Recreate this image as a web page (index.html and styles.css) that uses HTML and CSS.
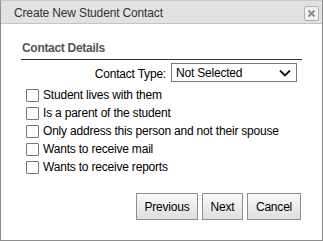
FILE: index.html
```html
<!DOCTYPE html>
<html>
<head>
<meta charset="utf-8">
<link rel="stylesheet" href="styles.css">
</head>
<body>
<div class="dialog">
  <div class="titlebar">
    <span class="title">Create New Student Contact</span>
    <span class="close"><svg width="9" height="9" viewBox="0 0 9 9"><path d="M1.5 1.5 L7.5 7.5 M7.5 1.5 L1.5 7.5" stroke="#8a8a8a" stroke-width="1.8"/></svg></span>
  </div>
  <div class="content">
    <div class="section-title">Contact Details</div>
    <div class="type-row">
      <span class="type-label">Contact Type:</span>
      <div class="select"><span>Not Selected</span><svg width="12" height="8" viewBox="0 0 12 8"><path d="M1 1.5 L6 6.5 L11 1.5" fill="none" stroke="#111" stroke-width="1.8"/></svg></div>
    </div>
    <div class="checks">
      <div class="check"><span class="box"></span><span>Student lives with them</span></div>
      <div class="check"><span class="box"></span><span>Is a parent of the student</span></div>
      <div class="check"><span class="box"></span><span>Only address this person and not their spouse</span></div>
      <div class="check"><span class="box"></span><span>Wants to receive mail</span></div>
      <div class="check"><span class="box"></span><span>Wants to receive reports</span></div>
    </div>
    <div class="buttons">
      <button class="btn prev">Previous</button>
      <button class="btn next">Next</button>
      <button class="btn cancel">Cancel</button>
    </div>
  </div>
</div>
</body>
</html>
```
FILE: styles.css
```css
html, body { margin: 0; padding: 0; background: #fff; }
body { font-family: "Liberation Sans", Arial, sans-serif; font-size: 12px; color: #000; letter-spacing: -0.2px; }
.dialog {
  width: 321px; height: 239px;
  border: 1px solid #8c8c8c;
  border-top-color: #c8c8c8;
  display: flex; flex-direction: column;
}
.titlebar {
  height: 22px;
  background: #e2e2e2;
  border-bottom: 1px solid #c4c4c4;
  display: flex; align-items: center; justify-content: space-between;
  padding: 0 3px 0 13px;
}
.title { color: #333; font-size: 12px; padding-top: 1px; letter-spacing: -0.15px; }
.close {
  width: 13px; height: 13px;
  border: 1px solid #b0b0b0; border-radius: 2px;
  background: #f2f2f2;
  display: flex; align-items: center; justify-content: center;
  margin-top: 3px;
}
.content { padding: 0 20px 0 20px; display: flex; flex-direction: column; }
.section-title {
  margin-top: 17px;
  font-weight: bold; font-size: 12px; color: #555; letter-spacing: -0.3px;
  padding: 0 0 4px 1px;
  border-bottom: 1px solid #333;
  width: 280px;
}
.type-row { display: flex; align-items: center; justify-content: flex-end; margin-top: 3px; padding-right: 5px; }
.type-label { margin-right: 5px; padding-top: 3px; }
.select {
  width: 115px; height: 17px;
  border: 1px solid #767676;
  display: flex; align-items: center; justify-content: space-between;
  padding: 0 5px 0 4px;
}
.checks { display: flex; flex-direction: column; margin-top: 4px; padding-left: 5px; }
.check { display: flex; align-items: center; height: 18px; }
.box { width: 11px; height: 11px; border: 1px solid #767676; background: #fff; margin-right: 4px; border-radius: 1px; }
.buttons { display: flex; justify-content: flex-end; gap: 4px; margin-top: 17px; padding-right: 1px; }
.btn {
  font-family: "Liberation Sans", Arial, sans-serif; font-size: 12px; color: #000; letter-spacing: -0.2px;
  height: 27px; padding: 0;
  border: 1px solid #8e8e8e;
  background: linear-gradient(#fafafa, #dedede);
}
.prev { width: 62px; }
.next { width: 41px; }
.cancel { width: 54px; }
```
